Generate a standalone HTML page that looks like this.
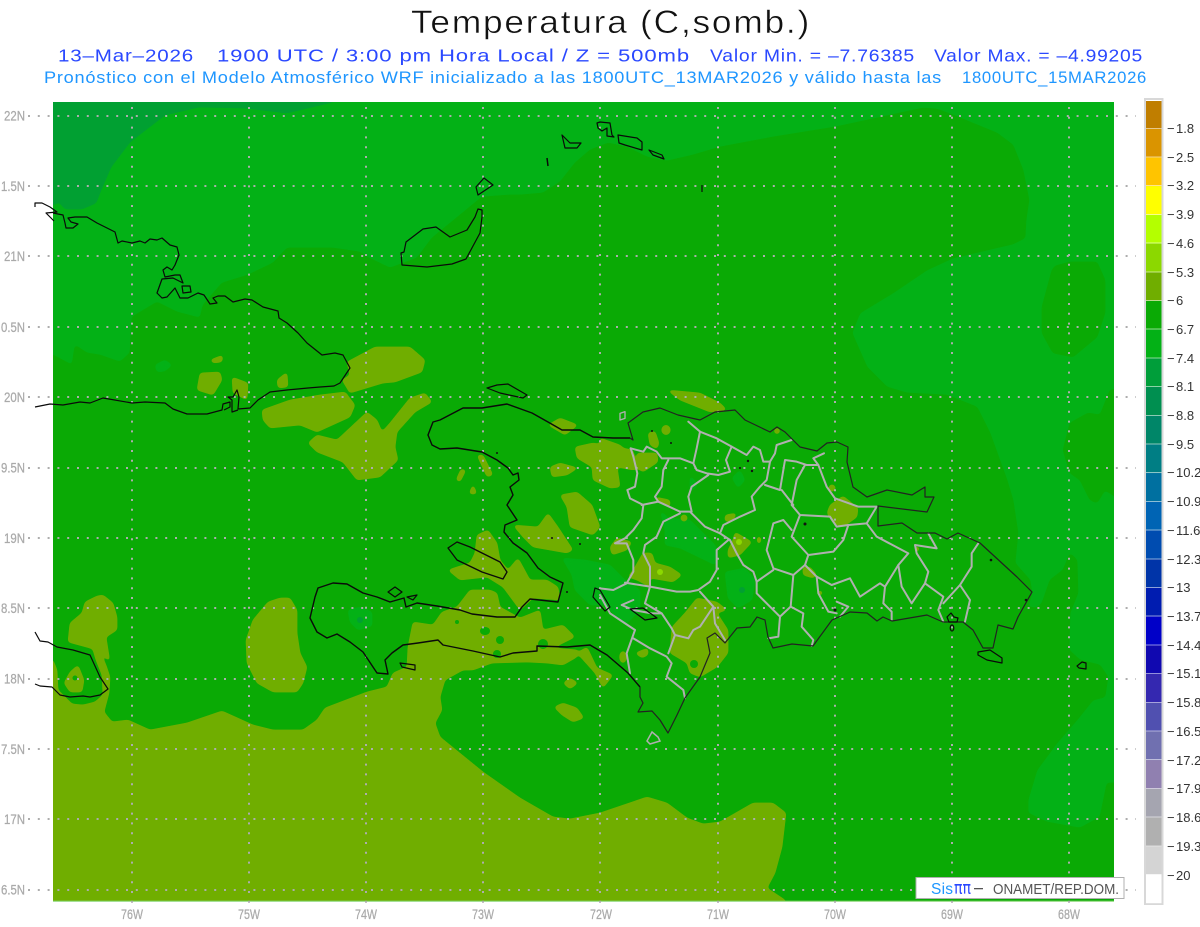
<!DOCTYPE html>
<html lang="es">
<head>
<meta charset="utf-8">
<title>Temperatura (C,somb.)</title>
<style>
html,body{margin:0;padding:0;background:#fff;width:1200px;height:927px;overflow:hidden}
svg{display:block}
text{font-family:"Liberation Sans",sans-serif}
.ax{fill:#aaa;font-size:14px;stroke:#aaa;stroke-width:.25px}
.cb{fill:#333;font-size:13px}
.t1{letter-spacing:1.6px}
.t2{letter-spacing:.7px}
</style>
</head>
<body>
<svg width="1200" height="927" viewBox="0 0 1200 927" xmlns="http://www.w3.org/2000/svg">
<defs>
<clipPath id="plot"><rect x="53" y="102" width="1061" height="799"/></clipPath>
<filter id="soft" filterUnits="userSpaceOnUse" x="0" y="60" width="1200" height="867" color-interpolation-filters="sRGB">
<feGaussianBlur stdDeviation="1.9"/>
<feColorMatrix type="matrix" values="1 0 0 0 0 0 1 0 0 0 0 0 1 0 0 0 0 0 10 -3.7"/>
</filter>
</defs>
<rect width="1200" height="927" fill="#fff"/>

<!-- titles -->
<text class="t1" x="411" y="33" font-size="32" fill="#111" stroke="#fff" stroke-width=".45" textLength="400" lengthAdjust="spacingAndGlyphs">Temperatura (C,somb.)</text>
<g fill="#2a48ff" font-size="17.5" class="t2">
<text x="58" y="61.5" textLength="136" lengthAdjust="spacingAndGlyphs">13–Mar–2026</text>
<text x="217" y="61.5" textLength="473" lengthAdjust="spacingAndGlyphs">1900 UTC / 3:00 pm Hora Local / Z = 500mb</text>
<text x="710" y="61.5" textLength="205" lengthAdjust="spacingAndGlyphs">Valor Min. = –7.76385</text>
<text x="934" y="61.5" textLength="209" lengthAdjust="spacingAndGlyphs">Valor Max. = –4.99205</text>
</g>
<g fill="#1e96ff" font-size="17" class="t2">
<text x="44" y="83" textLength="898" lengthAdjust="spacingAndGlyphs">Pronóstico con el Modelo Atmosférico WRF inicializado a las 1800UTC_13MAR2026 y válido hasta las</text>
<text x="962" y="83" textLength="185" lengthAdjust="spacingAndGlyphs">1800UTC_15MAR2026</text>
</g>

<!-- map fills -->
<rect x="53" y="102" width="1061" height="799" fill="#03b116"/>
<g clip-path="url(#plot)">
<g filter="url(#soft)">
<path fill="#01a032" d="M40,90L333,90L333,102L287,113L245,108L199,107L165,115L130,142L111,167L101,190L96,203L82,209L65,209L59,202L53,205L40,205Z"/>
</g>
<g fill="#0aaa05" filter="url(#soft)">
<path d="M40,355L53,355L72,365L75,345L87,353L100,355L120,362L130,353L132,317L157,302L177,312L200,318L203,305L222,283L248,275L273,263L287,248L333,248L360,252L367,257L390,268L417,258L432,238L482,197L509,195L520,195L543,193L560,182L575,163L590,150L608,143L627,147L647,157L667,161L693,155L720,147L773,137L835,127L923,108L937,109L953,115L997,133L1013,145L1023,170L1029,200L1026,220L1025,238L1013,244L953,258L927,270L893,293L860,313L852,333L867,367L887,387L907,393L947,395L977,407L990,433L1007,480L1013,500L1018,533L1015,563L1030,580L1032,593L1028,607L1037,608L1042,603L1050,580L1063,570L1070,553L1077,560L1078,593L1070,613L1069,650L1080,660L1100,665L1108,677L1105,697L1093,700L1077,720L1057,743L1037,770L1028,800L1028,813L1047,822L1080,828L1100,817L1107,783L1125,783L1125,915L40,915Z"/>
<path d="M1055,266L1070,262L1097,262L1105,280L1105,313L1097,337L1073,357L1053,353L1042,333L1042,307L1052,270Z"/>
<path d="M1125,388L1110,390L1100,415L1088,413L1070,423L1063,450L1070,473L1080,480L1090,500L1097,503L1105,490L1125,503Z"/>
</g>
<!-- light patches in dark zone -->
<g fill="#03b116" filter="url(#soft)">
<path d="M660,510L668,518L690,520L700,530L715,545L718,555L715,565L705,560L680,548L665,545L665,530Z"/>
<path d="M725,572L745,568L755,580L752,600L738,608L728,598Z"/>
<path d="M562,558L585,560L610,565L625,580L633,590L625,600L605,605L590,605L575,590L572,575Z"/>
<path d="M348,610L360,607L372,612L372,626L358,630L350,622Z"/>
<path d="M600,585L622,578L640,590L640,610L625,625L610,610Z"/>
<path d="M155,365L165,360L172,365L165,371L157,372Z"/>
<path d="M732,478L740,470L745,480L738,488Z"/>
<path d="M690,475L698,485L690,492Z"/>
</g>
<g fill="#01a032"><circle cx="742" cy="590" r="3"/><circle cx="360" cy="620" r="3"/></g>

<!-- olive -->
<g fill="#70ae00" filter="url(#soft)">
<path d="M40,660L53,660L57,670L58,690L72,704L83,705L95,702L104,712L112,722L128,720L150,730L187,723L222,711L253,725L273,730L303,730L317,720L325,708L367,692L387,687L393,673L407,667L408,647L413,622L433,625L442,612L457,607L470,590L490,590L497,593L500,607L520,618L540,610L543,630L563,625L575,637L553,648L578,650L577,657L563,665L547,663L527,662L492,663L473,670L463,670L445,680L440,697L442,710L435,723L440,737L483,772L520,798L553,817L570,819L600,813L647,797L667,803L687,818L703,824L720,822L753,803L773,803L786,813L782,847L775,873L767,888L785,900L790,915L40,915Z"/>
<path d="M93,650L98,648L106,665L110,677L109,693L104,712L95,702L103,695L102,675L96,660Z"/>
<path d="M103,595L113,603L117,617L117,630L106,637L110,662L100,652L90,648L68,642L70,623L82,613L85,602L97,596Z"/>
<path d="M78,665L84,680L82,692L70,692L64,683L70,672Z"/>
<path d="M280,598L290,598L297,610L297,633L300,653L307,667L303,683L297,692L273,692L257,683L247,663L246,640L253,620L268,602Z"/>
<path d="M200,373L220,372L222,380L213,395L197,390Z"/>
<path d="M232,377L248,383L247,400L233,393Z"/>
<path d="M210,360L223,355L222,362L213,363Z"/>
<path d="M277,380L287,372L288,387L278,388Z"/>
<path d="M347,362L375,347L410,347L425,360L422,372L395,382L383,383L350,393L342,380L350,375Z"/>
<path d="M262,410L290,400L320,395L345,392L355,405L350,417L317,432L300,425L270,428L263,420Z"/>
<path d="M308,443L317,435L337,440L367,412L377,420L382,432L390,423L410,398L425,393L432,402L415,412L397,432L395,447L398,460L380,477L357,480L343,462L317,452Z"/>
<path d="M548,425L560,418L578,425L565,435Z"/>
<path d="M575,447L593,443L633,450L637,470L617,467L620,487L610,488L593,480L592,467L577,458Z"/>
<path d="M550,467L560,463L578,468L567,475L552,477Z"/>
<path d="M477,455L483,455L493,475L487,477Z"/>
<path d="M461,469L466,470L460,482L456,480Z"/>
<path d="M473,484L477,494L469,494Z"/>
<path d="M560,495L577,492L592,505L600,527L593,535L570,527L567,507Z"/>
<path d="M513,525L538,527L548,513L558,527L573,550L567,553L533,547L523,537Z"/>
<path d="M477,535L488,530L497,543L500,560L508,570L518,558L523,567L530,580L547,580L558,587L560,600L533,598L520,610L503,587L487,577L460,580L448,570L457,567L470,563L475,553Z"/>
<path d="M587,647L597,668L613,675L603,688L595,673L577,653Z"/>
<path d="M563,683L570,678L578,683L570,689Z"/>
<path d="M554,707L563,703L577,708L584,718L573,722L562,715Z"/>
<path d="M667,390L700,393L720,403L727,410L710,412L680,400Z"/>
<path d="M600,438L620,445L633,457L633,470L617,467L620,487L610,488L600,480Z"/>
<path d="M637,453L657,453L658,462L643,472L637,468Z"/>
<path d="M648,433L655,431L659,443L657,449L650,445Z"/>
<ellipse cx="666" cy="430" rx="4.5" ry="5"/>
<path d="M830,505L843,496L858,508L857,517L843,527L833,523L827,513Z"/>
<circle cx="832" cy="488" r="3.5"/>
<path d="M610,547L617,538L632,542L627,550L612,555Z"/>
<path d="M643,553L652,553L655,563L670,567L682,575L673,582L650,578L650,587L637,580L628,577L635,567Z"/>
<path d="M735,532L752,542L740,555L728,558L728,550L733,540Z"/>
<path d="M725,515L737,513L733,520L725,522Z"/>
<circle cx="684" cy="518" r="3.5"/>
<path d="M655,497L670,500L670,507L657,502Z"/>
<ellipse cx="759" cy="540" rx="2" ry="4"/>
<path d="M697,598L717,602L727,610L717,613L728,630L728,653L717,667L700,677L690,673L687,663L670,653L672,627L685,613Z"/>
<path d="M635,653L648,648L648,655L642,658Z"/>
<ellipse cx="623" cy="657" rx="3.5" ry="6"/>
<path d="M803,567L810,567L817,575L813,578L803,575Z"/>
<circle cx="820" cy="593" r="2.5"/>
<circle cx="777" cy="431" r="3"/>
<circle cx="917" cy="549" r="2.5"/>
</g>
<circle cx="739" cy="542" r="3" fill="#8cd800"/>
<circle cx="660" cy="572" r="3" fill="#8cd800"/>
<!-- holes in olive -->
<g fill="#0aaa05">
<circle cx="75" cy="678" r="2.5"/>
<ellipse cx="485" cy="631" rx="5" ry="4"/>
<circle cx="500" cy="640" r="4"/>
<circle cx="497" cy="654" r="4"/>
<circle cx="543" cy="644" r="5"/>
<circle cx="457" cy="622" r="2"/>
<circle cx="694" cy="664" r="4"/>
<ellipse cx="570" cy="644" rx="3" ry="2"/>
</g>
</g>
<rect x="53" y="900.5" width="1061" height="1.5" fill="#7fd36a" opacity=".7"/>

<!-- grid -->
<g stroke="#adadad" stroke-width="2" stroke-dasharray="2 7.8" fill="none">
<path d="M28,116H1136M28,186H1136M28,256H1136M28,327H1136M28,397H1136M28,468H1136M28,538H1136M28,608H1136M28,679H1136M28,749H1136M28,819H1136M28,890H1136"/>
<path d="M132,107V908M249,107V908M366,107V908M483,107V908M600,107V908M718,107V908M835,107V908M952,107V908M1069,107V908"/>
</g>

<!-- province borders -->
<g transform="translate(600 390) scale(.33333)" fill="none" stroke="#b0b0b0" stroke-width="6" stroke-linejoin="round" stroke-linecap="round">
<path d="M92,175L100,200L112,250L105,290L82,300L90,325L130,345L125,385L100,420L75,445L45,460L80,460L100,510L100,545L80,580L40,600L0,595"/>
<path d="M75,578L150,590L230,605L270,605L295,600L330,575L350,540L350,480L385,450"/>
<path d="M265,95L300,125L350,145L395,170L440,195L460,170L480,180L490,215L510,215L500,270L480,290L455,320L465,360L420,380L370,405L360,430L390,450L410,490L430,525L460,545L470,575L470,610L510,650L540,680L535,740L505,745"/>
<path d="M92,175L130,185L140,170L170,185L185,205L240,205L280,220L290,175L300,125"/>
<path d="M205,210L190,240L185,290L165,320L175,335L240,365L270,365L315,410L360,430"/>
<path d="M280,220L290,240L320,250L355,255L390,245L378,210L395,170"/>
<path d="M325,255L275,290L265,320L275,365"/>
<path d="M175,335L125,345"/>
<path d="M240,370L190,395L170,440L135,465L130,490L150,530L150,590L135,640"/>
<path d="M135,640L185,670L215,715L225,735L265,745L280,720L300,710L340,650L300,605"/>
<path d="M340,650L345,700L375,750"/>
<path d="M100,745L150,775L200,800L215,820L200,860L250,900L255,925"/>
<path d="M225,735L205,790"/>
<path d="M0,615L30,670L105,720L80,790L90,850"/>
<path d="M100,630L65,645L100,660L155,670L185,670"/>
<path d="M495,285L540,300L550,240L555,210L590,215L620,225L655,225L680,290L705,325L775,350L830,350L800,400L830,440L925,490L895,525L855,590L850,640L875,665L875,690"/>
<path d="M525,190L530,165L575,150M525,190L510,215M640,205L672,190M640,205L655,225"/>
<path d="M615,225L590,270L575,345L600,375L690,380L710,410L745,405L800,400"/>
<path d="M545,300L580,345M600,375L575,440L625,495L615,525L580,555L520,535L500,480L520,400L550,390L575,420"/>
<path d="M625,495L700,485L730,450L745,405"/>
<path d="M615,525L650,560L695,585L750,565L780,620L840,580L855,590"/>
<path d="M895,525L905,590L935,640L975,580L985,545L950,490L945,465L1010,475L985,430"/>
<path d="M975,580L1030,620L1015,660L1030,695M1030,640L1080,585L1110,630L1095,695M1080,585L1115,530L1115,490L1135,460"/>
<path d="M580,555L572,650L540,680M572,650L610,670L605,710L640,750L635,768"/>
<path d="M470,575L520,540M650,560L655,610L685,665L710,670M710,635L745,650L720,680"/>
<path d="M60,70L75,65L75,85L60,90Z" stroke-width="4"/>
</g>
<path d="M652,732L658,737L660,741L650,744L647,741Z" fill="none" stroke="#b0b0b0" stroke-width="1.5"/>

<!-- coastlines -->
<g fill="none" stroke="#0a0a0a" stroke-width="1.2" stroke-linejoin="round">
<path d="M35,207L35,203L42,203L50,207L57,212L46,213L54,221"/>
<path d="M53,213L63,215L65,223L66,228L73,228L78,224L71,222L68,218L75,217L87,217L97,223L115,232L118,243L122,241L132,243L140,241L145,243L150,239L157,240L162,238L170,245L177,247L179,255L175,265L172,270L167,267L163,270L165,277L175,275L180,275L183,283L173,278L162,279L157,293L162,298L167,297L175,288L180,298L188,298L198,293L204,295L210,304L217,303L213,298L218,296L225,296L233,302L245,299L252,300L263,307L278,311L279,318L287,323L298,333L307,343L322,355L335,353L343,355L350,368L340,383L334,386L320,387L308,388L287,390L270,392L258,400L250,408L238,409L239,397L237,390L233,397L228,397L232,400L232,412L238,410"/>
<path d="M182,286L190,286L191,292L183,293Z"/>
<path d="M35,407L50,404L63,405L80,402L90,403L103,398L132,403L145,402L165,403L173,409L187,414L207,414L222,410L223,404L230,402L230,407L224,410"/>
<path d="M35,632L40,641L48,642L57,647L73,650L90,655L100,677L108,689L100,695L90,697L83,696L70,697L60,695L52,687L40,686L35,684"/>
<path d="M482,210L478,209L475,217L467,230L450,237L436,227L423,229L406,242L404,252L401,253L402,265L427,267L452,264L466,259L480,233L482,217Z"/>
<path d="M484,178L493,185L478,195L476,187Z"/>
<path d="M547,158L548,166" stroke-width="1.5"/>
<path d="M562,135L570,143L581,143L577,148L565,148Z"/>
<path d="M597,123L600,122L610,123L612,135L614,137L607,136L607,128L602,131L598,128Z"/>
<path d="M618,135L637,138L642,142L642,150L625,145L619,143Z"/>
<path d="M649,150L662,155L664,159L653,155Z"/>
<path d="M702,185L702,192"/>
<path d="M487,388L497,385L508,384L527,395L523,398L500,393Z"/>
<path d="M448,548L457,542L470,547L500,562L507,572L503,579L482,572L457,560Z" stroke-width="1.3"/>
<path d="M388,592L395,587L402,592L395,597Z"/>
<path d="M400,663L415,665L415,670L402,667Z"/>
<path d="M407,597L417,595L413,600Z"/>
<path d="M630,438L613,438L593,437L580,430L562,430L548,422L532,413L507,404L482,408L463,408L440,420L433,422L428,435L432,445L440,449L457,448L482,452L497,460L508,468L513,475L518,473L519,480L510,487L513,495L507,505L517,520L505,525L504,532L513,543L527,553L538,568L550,577L563,583L558,602L530,599L522,607L515,617L497,617L472,614L460,610L437,606L417,603L406,607L404,598L390,602L377,597L363,593L347,584L333,583L318,588L315,597L310,618L317,632L327,638L337,634L350,642L363,652L377,673L388,674L385,660L392,653L403,645L418,643L438,640L443,645L473,651L500,657L513,653L537,651L537,646L567,647L590,645L607,655L628,673L640,687" stroke-width="1.4"/>
<path d="M595,588L593,597L605,611L610,607L600,590Z"/>
<path d="M630,609L643,608L657,618L645,620Z"/>
<path d="M640,687L640,697L643,703L638,712L652,711L660,720L668,733L677,715L685,698L700,677L710,653L707,638L715,633L725,643L737,628L750,627L757,617L765,620L768,637L773,648L792,644L813,646L832,620L850,612L867,613L877,621L883,617L892,621L927,615L943,622L963,622L973,630L983,648L993,648L998,625L1013,629L1018,617L1032,592L1017,577L980,543L958,533L947,539L935,533L917,533L902,523L878,526L878,506L927,512L934,497L925,497L925,487L912,495L887,490L867,497L853,487L847,462L848,447L837,442L827,443L817,451L800,447L785,432L777,427L770,432L745,420L735,410L715,412L700,420L678,415L660,408L643,412L628,423L633,440L630,438" stroke="#222"/>
<path d="M978,652L990,650L1002,658L1002,663L987,660L978,655Z"/>
<path d="M947,617L951,613L954,617L958,618L957,622L949,622Z"/>
<ellipse cx="952" cy="628" rx="1.8" ry="3"/>
<path d="M1077,666L1082,662L1086,663L1086,669L1079,668Z"/>
</g>
<g fill="#111">
<circle cx="748" cy="461" r="1.2"/><circle cx="740" cy="468" r="1"/><circle cx="752" cy="471" r="1.2"/>
<circle cx="671" cy="443" r="1"/><circle cx="652" cy="431" r="1"/><circle cx="805" cy="524" r="1.5"/>
<circle cx="991" cy="560" r="1.3"/><circle cx="1026" cy="600" r="1.3"/><circle cx="835" cy="610" r="1.5"/>
<circle cx="497" cy="453" r="1"/><circle cx="552" cy="538" r="1"/><circle cx="580" cy="544" r="1"/><circle cx="567" cy="592" r="1"/>
</g>

<!-- axis labels -->
<g class="ax">
<text x="25" y="120.5" text-anchor="end" textLength="21" lengthAdjust="spacingAndGlyphs">22N</text>
<text x="25" y="191" text-anchor="end" textLength="24" lengthAdjust="spacingAndGlyphs">1.5N</text>
<text x="25" y="261" text-anchor="end" textLength="21" lengthAdjust="spacingAndGlyphs">21N</text>
<text x="25" y="332" text-anchor="end" textLength="24" lengthAdjust="spacingAndGlyphs">0.5N</text>
<text x="25" y="402" text-anchor="end" textLength="21" lengthAdjust="spacingAndGlyphs">20N</text>
<text x="25" y="472.5" text-anchor="end" textLength="24" lengthAdjust="spacingAndGlyphs">9.5N</text>
<text x="25" y="543" text-anchor="end" textLength="21" lengthAdjust="spacingAndGlyphs">19N</text>
<text x="25" y="613" text-anchor="end" textLength="24" lengthAdjust="spacingAndGlyphs">8.5N</text>
<text x="25" y="683.5" text-anchor="end" textLength="21" lengthAdjust="spacingAndGlyphs">18N</text>
<text x="25" y="754" text-anchor="end" textLength="24" lengthAdjust="spacingAndGlyphs">7.5N</text>
<text x="25" y="824" text-anchor="end" textLength="21" lengthAdjust="spacingAndGlyphs">17N</text>
<text x="25" y="894.5" text-anchor="end" textLength="24" lengthAdjust="spacingAndGlyphs">6.5N</text>
<text x="121" y="919" textLength="22" lengthAdjust="spacingAndGlyphs">76W</text>
<text x="238" y="919" textLength="22" lengthAdjust="spacingAndGlyphs">75W</text>
<text x="355" y="919" textLength="22" lengthAdjust="spacingAndGlyphs">74W</text>
<text x="472" y="919" textLength="22" lengthAdjust="spacingAndGlyphs">73W</text>
<text x="590" y="919" textLength="22" lengthAdjust="spacingAndGlyphs">72W</text>
<text x="707" y="919" textLength="22" lengthAdjust="spacingAndGlyphs">71W</text>
<text x="824" y="919" textLength="22" lengthAdjust="spacingAndGlyphs">70W</text>
<text x="941" y="919" textLength="22" lengthAdjust="spacingAndGlyphs">69W</text>
<text x="1058" y="919" textLength="22" lengthAdjust="spacingAndGlyphs">68W</text>
</g>

<!-- legend box -->
<rect x="916" y="877.5" width="208" height="21" fill="#fff" stroke="#b0b0b0" stroke-width="1"/>
<text x="931" y="894" font-size="15.5" fill="#1e96ff" textLength="22">Sis</text>
<text x="954" y="894" font-size="18" fill="#2a48ff" textLength="17" lengthAdjust="spacingAndGlyphs" style="font-family:'DejaVu Sans',sans-serif">ππ</text>
<rect x="974" y="888" width="9" height="1.3" fill="#555"/>
<text x="993" y="894" font-size="14.5" fill="#555" textLength="126" lengthAdjust="spacingAndGlyphs">ONAMET/REP.DOM.</text>

<!-- colourbar -->
<rect x="1145" y="99" width="17.5" height="805" fill="#fff" stroke="#d8d8d8" stroke-width="2"/>
<g>
<rect x="1146" y="101" width="15.5" height="28" fill="#c07e00"/>
<rect x="1146" y="128.7" width="15.5" height="29" fill="#da9400"/>
<rect x="1146" y="157.4" width="15.5" height="29" fill="#ffc400"/>
<rect x="1146" y="186.1" width="15.5" height="29" fill="#ffff00"/>
<rect x="1146" y="214.8" width="15.5" height="29" fill="#b4ff00"/>
<rect x="1146" y="243.5" width="15.5" height="29" fill="#8cd800"/>
<rect x="1146" y="272.2" width="15.5" height="29" fill="#70ae00"/>
<rect x="1146" y="300.9" width="15.5" height="29" fill="#0aaa05"/>
<rect x="1146" y="329.6" width="15.5" height="29" fill="#03b116"/>
<rect x="1146" y="358.3" width="15.5" height="29" fill="#009e3a"/>
<rect x="1146" y="387" width="15.5" height="29" fill="#008f50"/>
<rect x="1146" y="415.7" width="15.5" height="29" fill="#008668"/>
<rect x="1146" y="444.4" width="15.5" height="29" fill="#007e84"/>
<rect x="1146" y="473.1" width="15.5" height="29" fill="#0070a0"/>
<rect x="1146" y="501.8" width="15.5" height="29" fill="#0064b4"/>
<rect x="1146" y="530.5" width="15.5" height="29" fill="#004cb0"/>
<rect x="1146" y="559.2" width="15.5" height="29" fill="#0034a8"/>
<rect x="1146" y="587.9" width="15.5" height="29" fill="#001cb0"/>
<rect x="1146" y="616.6" width="15.5" height="29" fill="#0000c8"/>
<rect x="1146" y="645.3" width="15.5" height="29" fill="#1008b0"/>
<rect x="1146" y="674" width="15.5" height="29" fill="#3428b0"/>
<rect x="1146" y="702.7" width="15.5" height="29" fill="#5050b0"/>
<rect x="1146" y="731.4" width="15.5" height="29" fill="#7070b0"/>
<rect x="1146" y="760.1" width="15.5" height="29" fill="#9080b0"/>
<rect x="1146" y="788.8" width="15.5" height="29" fill="#a5a5b0"/>
<rect x="1146" y="817.5" width="15.5" height="29" fill="#b0b0b0"/>
<rect x="1146" y="846.2" width="15.5" height="28.5" fill="#d4d4d4"/>
<rect x="1146" y="874.2" width="15.5" height="29" fill="#fff"/>
</g>
<path d="M1146,128.5h15.5M1146,157h15.5M1146,185.5h15.5M1146,214.5h15.5M1146,243h15.5M1146,272h15.5M1146,300.5h15.5M1146,329h15.5M1146,358h15.5M1146,386.5h15.5M1146,415.5h15.5M1146,444h15.5M1146,472.5h15.5M1146,501.5h15.5M1146,530h15.5M1146,559h15.5M1146,587.5h15.5M1146,616h15.5M1146,645h15.5M1146,673.5h15.5M1146,702.5h15.5M1146,731h15.5M1146,759.5h15.5M1146,788.5h15.5M1146,817h15.5M1146,846h15.5" stroke="#fff" stroke-opacity=".55" stroke-width="1"/>
<g class="cb">
<text x="1167" y="133">−<tspan x="1176">1.8</tspan></text>
<text x="1167" y="162">−<tspan x="1176">2.5</tspan></text>
<text x="1167" y="190">−<tspan x="1176">3.2</tspan></text>
<text x="1167" y="219">−<tspan x="1176">3.9</tspan></text>
<text x="1167" y="248">−<tspan x="1176">4.6</tspan></text>
<text x="1167" y="277">−<tspan x="1176">5.3</tspan></text>
<text x="1167" y="305">−<tspan x="1176">6</tspan></text>
<text x="1167" y="334">−<tspan x="1176">6.7</tspan></text>
<text x="1167" y="363">−<tspan x="1176">7.4</tspan></text>
<text x="1167" y="391">−<tspan x="1176">8.1</tspan></text>
<text x="1167" y="420">−<tspan x="1176">8.8</tspan></text>
<text x="1167" y="449">−<tspan x="1176">9.5</tspan></text>
<text x="1167" y="477">−<tspan x="1176">10.2</tspan></text>
<text x="1167" y="506">−<tspan x="1176">10.9</tspan></text>
<text x="1167" y="535">−<tspan x="1176">11.6</tspan></text>
<text x="1167" y="564">−<tspan x="1176">12.3</tspan></text>
<text x="1167" y="592">−<tspan x="1176">13</tspan></text>
<text x="1167" y="621">−<tspan x="1176">13.7</tspan></text>
<text x="1167" y="650">−<tspan x="1176">14.4</tspan></text>
<text x="1167" y="678">−<tspan x="1176">15.1</tspan></text>
<text x="1167" y="707">−<tspan x="1176">15.8</tspan></text>
<text x="1167" y="736">−<tspan x="1176">16.5</tspan></text>
<text x="1167" y="765">−<tspan x="1176">17.2</tspan></text>
<text x="1167" y="793">−<tspan x="1176">17.9</tspan></text>
<text x="1167" y="822">−<tspan x="1176">18.6</tspan></text>
<text x="1167" y="851">−<tspan x="1176">19.3</tspan></text>
<text x="1167" y="880">−<tspan x="1176">20</tspan></text>
</g>
</svg>
</body>
</html>
